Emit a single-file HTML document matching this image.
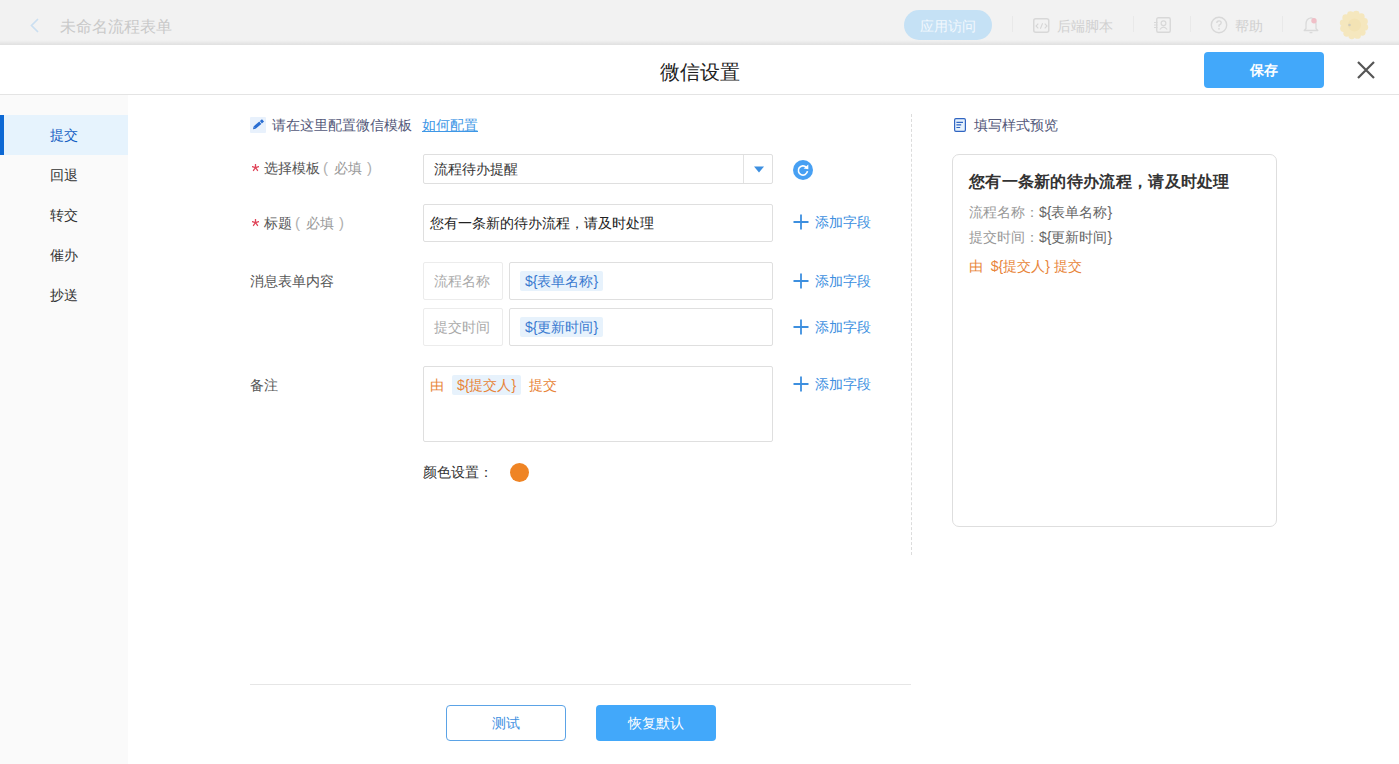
<!DOCTYPE html>
<html><head><meta charset="utf-8">
<style>
*{box-sizing:border-box;margin:0;padding:0}
html,body{width:1399px;height:764px;overflow:hidden;background:#fff;font-family:"Liberation Sans",sans-serif;font-size:14px;color:#333}
.abs{position:absolute}
.pl{display:inline-block;width:14px;padding-left:3px;font-size:15px;color:#b0b0b0}
.pr{display:inline-block;width:14px;padding-left:5px;font-size:15px;color:#b0b0b0}
.t{position:absolute;white-space:nowrap;line-height:20px;height:20px}
/* top bar */
#top{position:absolute;left:0;top:0;width:1399px;height:45px;background:#f2f2f2}
#topshadow{position:absolute;left:0;top:40px;width:1399px;height:5px;background:linear-gradient(to bottom,rgba(0,0,0,0),rgba(0,0,0,0.075))}
/* modal header */
#hdr{position:absolute;left:0;top:45px;width:1399px;height:50px;background:#fff;border-bottom:1px solid #e4e4e4}
/* sidebar */
#side{position:absolute;left:0;top:95px;width:128px;height:669px;background:#fafafa}
.mi{position:absolute;left:0;width:128px;height:40px;line-height:40px;padding-left:50px;color:#333}
.mi.act{background:#e6f3fd;color:#1460c4}
.mi.act:before{content:"";position:absolute;left:0;top:0;width:4px;height:40px;background:#0c68d4}
.box{position:absolute;border:1px solid #dfdfdf;border-radius:2px;background:#fff}
.lbox{position:absolute;border:1px solid #ececec;border-radius:2px;background:#fff;color:#aaa;padding-left:10px}
.tag{position:absolute;background:#e7f2fc;border-radius:2px;color:#3a7ad0;height:20px;line-height:20px;padding:0 5px;white-space:nowrap}
.add{position:absolute;color:#3d8fdf;white-space:nowrap;line-height:20px}
.add svg{position:absolute;left:0;top:2px}
.add span{position:absolute;left:22px;top:0}
</style></head>
<body>
<!-- TOP BAR (dimmed) -->
<div id="top">
  <svg class="abs" style="left:28px;top:17px" width="13" height="17" viewBox="0 0 13 17"><path d="M10 2 L3.5 8.5 L10 15" fill="none" stroke="#cbdff1" stroke-width="1.7"/></svg>
  <div class="t" style="left:60px;top:16px;font-size:16px;color:#c9c9c9;line-height:22px;height:22px">未命名流程表单</div>
  <div class="abs" style="left:904px;top:10px;width:88px;height:30px;border-radius:15px;background:#c5e1f5"></div>
  <div class="t" style="left:904px;top:16px;width:88px;text-align:center;color:#f2f8fd">应用访问</div>
  <div class="abs" style="left:1012px;top:16px;width:1px;height:16px;background:#e9e9e9"></div>
  <svg class="abs" style="left:1033px;top:18px" width="17" height="15" viewBox="0 0 17 15"><rect x="0.75" y="0.75" width="15" height="13.5" rx="2" fill="none" stroke="#d8d8d8" stroke-width="1.5"/><path d="M5.3 5.6 L3 8 L5.3 10.4 M11.7 5.6 L14 8 L11.7 10.4 M9.6 5.3 L7.4 10.7" fill="none" stroke="#d6d6d6" stroke-width="1.1"/></svg>
  <div class="t" style="left:1057px;top:16px;color:#d0d0d0">后端脚本</div>
  <div class="abs" style="left:1133px;top:16px;width:1px;height:16px;background:#e9e9e9"></div>
  <svg class="abs" style="left:1154px;top:17px" width="17" height="16" viewBox="0 0 17 16"><rect x="2.75" y="0.75" width="13.5" height="14.5" rx="1.5" fill="none" stroke="#d8d8d8" stroke-width="1.4"/><circle cx="9.5" cy="6.2" r="2.4" fill="none" stroke="#d8d8d8" stroke-width="1.2"/><path d="M5.8 12.5 Q9.5 7.8 13.2 12.5" fill="none" stroke="#d8d8d8" stroke-width="1.2"/><path d="M0 5.5h3.5M0 8h3.5M0 10.5h3.5" stroke="#d8d8d8" stroke-width="1.1"/></svg>
  <div class="abs" style="left:1190px;top:16px;width:1px;height:16px;background:#e9e9e9"></div>
  <svg class="abs" style="left:1210px;top:16px" width="18" height="18" viewBox="0 0 18 18"><circle cx="9" cy="9" r="7.7" fill="none" stroke="#d8d8d8" stroke-width="1.4"/><path d="M6.8 7 Q6.8 4.8 9 4.8 Q11.2 4.8 11.2 6.8 Q11.2 8.2 9 9.2 L9 10.8" fill="none" stroke="#d8d8d8" stroke-width="1.3"/><circle cx="9" cy="12.8" r="0.9" fill="#d8d8d8"/></svg>
  <div class="t" style="left:1235px;top:16px;color:#d0d0d0">帮助</div>
  <div class="abs" style="left:1282px;top:16px;width:1px;height:16px;background:#e9e9e9"></div>
  <svg class="abs" style="left:1302px;top:17px" width="18" height="17" viewBox="0 0 18 17"><path d="M2.2 13.5 H15.8 L14 11.5 V7.5 Q14 1.2 9 0.8 Q4 1.2 4 7.5 V11.5 Z" fill="none" stroke="#dadada" stroke-width="1.3" stroke-linejoin="round"/><path d="M7.6 15.6 H10.4" stroke="#dadada" stroke-width="1.3"/><circle cx="12" cy="3.8" r="2.7" fill="#f0bfc7"/></svg>
  <svg class="abs" style="left:1339px;top:10px" width="30" height="30" viewBox="0 0 30 30"><g fill="#f5e7be"><circle cx="25.78" cy="17.19" r="3.4"/><circle cx="23.24" cy="22.28" r="3.4"/><circle cx="18.50" cy="25.43" r="3.4"/><circle cx="12.81" cy="25.78" r="3.4"/><circle cx="7.72" cy="23.24" r="3.4"/><circle cx="4.57" cy="18.50" r="3.4"/><circle cx="4.22" cy="12.81" r="3.4"/><circle cx="6.76" cy="7.72" r="3.4"/><circle cx="11.50" cy="4.57" r="3.4"/><circle cx="17.19" cy="4.22" r="3.4"/><circle cx="22.28" cy="6.76" r="3.4"/><circle cx="25.43" cy="11.50" r="3.4"/><circle cx="15" cy="15" r="10.5"/></g><circle cx="15.5" cy="15" r="6.5" fill="#f3e3b4"/><circle cx="10.5" cy="15" r="1.3" fill="#d0cbbd"/></svg>
</div>
<div id="topshadow"></div>

<!-- MODAL HEADER -->
<div id="hdr">
  <div class="t" style="left:0;top:14px;width:1399px;text-align:center;font-size:20px;line-height:26px;height:26px;color:#222">微信设置</div>
  <div class="abs" style="left:1204px;top:7px;width:120px;height:36px;border-radius:4px;background:#42a8fa;color:#fff;text-align:center;line-height:36px;font-weight:bold">保存</div>
  <svg class="abs" style="left:1356px;top:15px" width="20" height="20" viewBox="0 0 20 20"><path d="M2 2 L18 18 M18 2 L2 18" stroke="#555" stroke-width="2.2"/></svg>
</div>

<!-- SIDEBAR -->
<div id="side">
  <div class="mi act" style="top:20px">提交</div>
  <div class="mi" style="top:60px">回退</div>
  <div class="mi" style="top:100px">转交</div>
  <div class="mi" style="top:140px">催办</div>
  <div class="mi" style="top:180px">抄送</div>
</div>

<!-- FORM -->
<div class="abs" style="left:250px;top:117px;width:16px;height:16px;background:#e8f1fc;border-radius:1px"></div>
<svg class="abs" style="left:250px;top:117px" width="16" height="16" viewBox="0 0 16 16"><path d="M4.6 10.6 L10.3 5.7 M10.9 5.2 L13 3.4" stroke="#2a6ed2" stroke-width="3.1"/><path d="M3 12.2 L3.6 9.4 L5.7 11.8 Z" fill="#2a6ed2"/></svg>
<div class="t" style="left:272px;top:115px;color:#535879">请在这里配置微信模板</div>
<div class="t" style="left:422px;top:115px;color:#3e97e6;text-decoration:underline">如何配置</div>

<svg class="abs" style="left:251.5px;top:163.5px" width="7" height="8" viewBox="0 0 7 8"><path d="M3.5 3.7 L3.50 0.30 M3.5 3.7 L6.73 2.65 M3.5 3.7 L5.50 6.45 M3.5 3.7 L1.50 6.45 M3.5 3.7 L0.27 2.65 " stroke="#e0465a" stroke-width="1.3" stroke-linecap="round"/></svg>
<div class="t" style="left:264px;top:158px;color:#555">选择模板<span style="color:#999"><span class="pl">(</span>必填<span class="pr">)</span></span></div>
<div class="box" style="left:423px;top:154px;width:350px;height:30px"></div>
<div class="abs" style="left:743px;top:155px;width:1px;height:28px;background:#e2e2e2"></div>
<svg class="abs" style="left:754px;top:166px" width="10" height="7" viewBox="0 0 10 7"><path d="M0 0.5 L10 0.5 L5 6.5 Z" fill="#3d8fe0"/></svg>
<div class="t" style="left:434px;top:159px;color:#333">流程待办提醒</div>
<svg class="abs" style="left:793px;top:159.5px" width="20" height="20" viewBox="0 0 20 20"><circle cx="10" cy="10" r="10" fill="#47a0f3"/><path d="M13.4 7.4 A4.6 4.6 0 1 0 14.5 11.2" fill="none" stroke="#fff" stroke-width="1.6"/><path d="M15.3 4.6 L15.3 9.3 L10.6 8.4 Z" fill="#fff"/></svg>

<svg class="abs" style="left:251.5px;top:218.5px" width="7" height="8" viewBox="0 0 7 8"><path d="M3.5 3.7 L3.50 0.30 M3.5 3.7 L6.73 2.65 M3.5 3.7 L5.50 6.45 M3.5 3.7 L1.50 6.45 M3.5 3.7 L0.27 2.65 " stroke="#e0465a" stroke-width="1.3" stroke-linecap="round"/></svg>
<div class="t" style="left:264px;top:213px;color:#555">标题<span style="color:#999"><span class="pl">(</span>必填<span class="pr">)</span></span></div>
<div class="box" style="left:423px;top:204px;width:350px;height:38px"></div>
<div class="t" style="left:430px;top:213px;color:#222">您有一条新的待办流程，请及时处理</div>
<div class="add" style="left:793px;top:212px"><svg width="16" height="16" viewBox="0 0 16 16"><path d="M8 0.5 V15.5 M0.5 8 H15.5" stroke="#3d8fdf" stroke-width="1.8"/></svg><span>添加字段</span></div>

<div class="t" style="left:250px;top:271px;color:#555">消息表单内容</div>
<div class="lbox" style="left:423px;top:262px;width:80px;height:38px;line-height:36px">流程名称</div>
<div class="box" style="left:509px;top:262px;width:264px;height:38px"></div>
<div class="tag" style="left:520px;top:271px">${表单名称}</div>
<div class="add" style="left:793px;top:271px"><svg width="16" height="16" viewBox="0 0 16 16"><path d="M8 0.5 V15.5 M0.5 8 H15.5" stroke="#3d8fdf" stroke-width="1.8"/></svg><span>添加字段</span></div>

<div class="lbox" style="left:423px;top:308px;width:80px;height:38px;line-height:36px">提交时间</div>
<div class="box" style="left:509px;top:308px;width:264px;height:38px"></div>
<div class="tag" style="left:520px;top:317px">${更新时间}</div>
<div class="add" style="left:793px;top:317px"><svg width="16" height="16" viewBox="0 0 16 16"><path d="M8 0.5 V15.5 M0.5 8 H15.5" stroke="#3d8fdf" stroke-width="1.8"/></svg><span>添加字段</span></div>

<div class="t" style="left:250px;top:375px;color:#555">备注</div>
<div class="box" style="left:423px;top:366px;width:350px;height:76px"></div>
<div class="t" style="left:430px;top:375px;color:#e8853a">由</div>
<div class="tag" style="left:452px;top:375px;color:#e8853a">${提交人}</div>
<div class="t" style="left:529px;top:375px;color:#e8853a">提交</div>
<div class="add" style="left:793px;top:374px"><svg width="16" height="16" viewBox="0 0 16 16"><path d="M8 0.5 V15.5 M0.5 8 H15.5" stroke="#3d8fdf" stroke-width="1.8"/></svg><span>添加字段</span></div>

<div class="t" style="left:423px;top:462px;color:#333">颜色设置：</div>
<div class="abs" style="left:509.5px;top:462.5px;width:19px;height:19px;border-radius:50%;background:#ef8424"></div>

<!-- divider dashed -->
<div class="abs" style="left:911px;top:114px;width:0;height:441px;border-left:1px dashed #dcdcdc"></div>

<!-- preview -->
<svg class="abs" style="left:954px;top:118px" width="12" height="14" viewBox="0 0 12 14"><rect x="0.6" y="0.6" width="10.8" height="12.8" rx="1.3" fill="#e6f2fc" stroke="#3065c2" stroke-width="1.2"/><path d="M2.4 4.4 H9 M2.4 6.9 H7.2 M2.4 9.5 H6.2" stroke="#3065c2" stroke-width="1.1"/></svg>
<div class="t" style="left:974px;top:115px;color:#535879">填写样式预览</div>
<div class="abs" style="left:952px;top:154px;width:325px;height:373px;border:1px solid #dedede;border-radius:7px"></div>
<div class="t" style="left:969px;top:172px;font-size:16px;font-weight:bold;color:#333;letter-spacing:0.3px">您有一条新的待办流程，请及时处理</div>
<div class="t" style="left:969px;top:202px;color:#999">流程名称：<span style="color:#666">${表单名称}</span></div>
<div class="t" style="left:969px;top:227px;color:#999">提交时间：<span style="color:#666">${更新时间}</span></div>
<div class="t" style="left:969px;top:256px;color:#e8853a">由&nbsp; ${提交人} 提交</div>

<!-- bottom -->
<div class="abs" style="left:250px;top:684px;width:661px;height:1px;background:#e6e6e6"></div>
<div class="abs" style="left:446px;top:705px;width:120px;height:36px;border:1px solid #5ba3e6;border-radius:4px;color:#3d8fdf;text-align:center;line-height:34px">测试</div>
<div class="abs" style="left:596px;top:705px;width:120px;height:36px;border-radius:4px;background:#42a8fa;color:#fff;text-align:center;line-height:36px">恢复默认</div>
</body></html>
